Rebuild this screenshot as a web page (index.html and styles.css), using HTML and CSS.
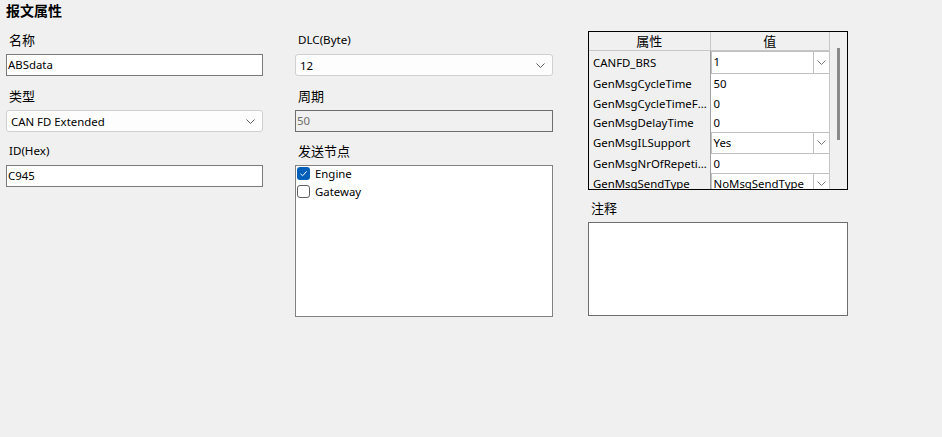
FILE: index.html
```html
<!DOCTYPE html>
<html lang="zh-CN">
  <head>
    <meta charset="UTF-8" />
    <title>报文属性</title>
    <link rel="stylesheet" href="styles.css">
  </head>
  <body>
    <h1 class="title">报文属性</h1>
    <div class="columns">
      <div class="col col-a">
        <span class="lbl">名称</span>
        <div class="edit">ABSdata</div>

        <span class="lbl">类型</span>
        <div class="combo">
          <span>CAN FD Extended</span>
          <svg class="chev" width="9" height="5" viewBox="0 0 9 5"><path d="M0.5 0.5 L4.5 4.5 L8.5 0.5" fill="none" stroke="#5a5a5a" stroke-width="1"/></svg>
        </div>

        <span class="lbl latin last">ID(Hex)</span>
        <div class="edit">C945</div>
      </div>

      <div class="col col-b">
        <span class="lbl latin">DLC(Byte)</span>
        <div class="combo">
          <span>12</span>
          <svg class="chev" width="9" height="5" viewBox="0 0 9 5"><path d="M0.5 0.5 L4.5 4.5 L8.5 0.5" fill="none" stroke="#5a5a5a" stroke-width="1"/></svg>
        </div>

        <span class="lbl">周期</span>
        <div class="edit disabled">50</div>

        <span class="lbl last">发送节点</span>
        <div class="list">
          <div class="item">
            <span class="check on">
              <svg width="13" height="13" viewBox="0 0 13 13"><path d="M3.5 6.8 L5.6 8.8 L9.6 4.4" fill="none" stroke="#fff" stroke-width="1"/></svg>
            </span>
            Engine
          </div>
          <div class="item">
            <span class="check"></span>
            Gateway
          </div>
        </div>
      </div>

      <div class="col col-c">
        <div class="grid">
          <table class="props">
            <tr class="head">
              <th>属性</th>
              <th>值</th>
            </tr>
            <tr class="r-combo tall">
              <td class="key">CANFD_BRS</td>
              <td class="val"><div class="cell-combo"><span>1</span><i class="drop"><svg width="9" height="5" viewBox="0 0 9 5"><path d="M0.5 0.5 L4.5 4.5 L8.5 0.5" fill="none" stroke="#7a7a7a" stroke-width="1"/></svg></i></div></td>
            </tr>
            <tr class="r-after">
              <td class="key">GenMsgCycleTime</td>
              <td class="val">50</td>
            </tr>
            <tr>
              <td class="key">GenMsgCycleTimeFast</td>
              <td class="val">0</td>
            </tr>
            <tr>
              <td class="key">GenMsgDelayTime</td>
              <td class="val">0</td>
            </tr>
            <tr class="r-combo">
              <td class="key">GenMsgILSupport</td>
              <td class="val"><div class="cell-combo"><span>Yes</span><i class="drop"><svg width="9" height="5" viewBox="0 0 9 5"><path d="M0.5 0.5 L4.5 4.5 L8.5 0.5" fill="none" stroke="#7a7a7a" stroke-width="1"/></svg></i></div></td>
            </tr>
            <tr>
              <td class="key">GenMsgNrOfRepetitions</td>
              <td class="val">0</td>
            </tr>
            <tr class="r-combo">
              <td class="key">GenMsgSendType</td>
              <td class="val"><div class="cell-combo"><span>NoMsgSendType</span><i class="drop"><svg width="9" height="5" viewBox="0 0 9 5"><path d="M0.5 0.5 L4.5 4.5 L8.5 0.5" fill="none" stroke="#7a7a7a" stroke-width="1"/></svg></i></div></td>
            </tr>
          </table>
          <div class="scroll"><div class="thumb"></div></div>
        </div>

        <span class="lbl lbl-note">注释</span>
        <div class="note"></div>
      </div>
    </div>
  </body>
</html>
```

FILE: styles.css
```css
* {
  box-sizing: border-box;
}
body {
  margin: 0;
  width: 942px;
  height: 437px;
  background: #f0f0f0;
  color: #000;
  font-family: "Noto Sans", "Noto Sans CJK SC", sans-serif;
  font-size: 11.4px;
}
.title {
  margin: 0;
  padding-left: 6px;
  height: 20px;
  line-height: 20px;
  font-size: 14px;
  font-weight: bold;
  font-family: "Noto Sans CJK SC", sans-serif;
}
.columns {
  display: flex;
  padding-left: 6px;
}
.col-a {
  width: 257px;
}
.col-b {
  width: 258px;
  margin-left: 32px;
}
.col-c {
  width: 260px;
  margin-left: 35px;
}
.lbl {
  display: block;
  height: 20px;
  line-height: 20px;
  margin: 10px 0 4px 3px;
  font-size: 13px;
}
.lbl.latin {
  font-size: 11.6px;
}
.lbl.last {
  margin-top: 9px;
}
.edit {
  height: 22px;
  line-height: 20px;
  padding-left: 1px;
  border: 1px solid #7a7a7a;
  background: #fff;
}
.edit.disabled {
  background: #f0f0f0;
  color: #6d6d6d;
  border-color: #6e6e6e;
}
.combo {
  display: flex;
  align-items: center;
  justify-content: space-between;
  height: 22px;
  padding: 0 7px 0 4px;
  border: 1px solid #d0d0d0;
  border-radius: 3px;
  background: #fdfdfd;
}
.list {
  height: 152px;
  border: 1px solid #828282;
  background: #fff;
}
.item {
  display: flex;
  align-items: center;
  height: 18px;
  padding-left: 1px;
  gap: 5px;
}
.item:first-child {
  margin-top: -2px;
}
.check {
  display: block;
  width: 13px;
  height: 13px;
  border: 1px solid #5f5f5f;
  border-radius: 3px;
  background: #fff;
}
.check.on {
  border: none;
  background: #005fb8;
}
.check svg {
  display: block;
}

/* property grid */
.grid {
  display: flex;
  margin-top: 11px;
  height: 159px;
  border: 1px solid #000;
  overflow: hidden;
}
.props {
  width: 241px;
  border-collapse: collapse;
  table-layout: fixed;
  align-self: flex-start;
}
.props th {
  height: 18px;
  padding: 0;
  font-weight: normal;
  font-size: 13px;
  line-height: 17px;
  background: #f0f0f0;
  border-right: 1px solid #c6c6c6;
  border-bottom: 1px solid #c6c6c6;
  font-family: "Noto Sans CJK SC", sans-serif;
}
.props th:first-child {
  width: 121px;
}
.props td {
  padding: 0;
  height: 19px;
  line-height: 19px;
}
.props tr.r-after td {
  height: 20px;
}
.props tr.r-combo td {
  height: 22px;
}
.props tr.tall td {
  height: 23px;
}
.props .key {
  padding-left: 4px;
  background: #f0f0f0;
  border-right: 1px solid #a0a0a0;
  white-space: nowrap;
  overflow: hidden;
  text-overflow: ellipsis;
}
.props .val {
  padding-left: 3px;
  background: #fff;
  border-right: 1px solid #c6c6c6;
}
.props tr.r-combo .val {
  padding: 0;
}
.cell-combo {
  display: flex;
  height: 22px;
  border: 1px solid #c0c0c0;
  border-right: none;
  background: #fff;
}
.tall .cell-combo {
  height: 23px;
}
.cell-combo span {
  flex: 1;
  padding-left: 2px;
  line-height: 20px;
  white-space: nowrap;
  overflow: hidden;
}
.cell-combo .drop {
  display: flex;
  align-items: center;
  justify-content: center;
  width: 16px;
  border-left: 1px solid #c0c0c0;
}
.scroll {
  flex: 1;
  background: #f0f0f0;
  padding: 16px 0 0 7px;
}
.thumb {
  width: 3px;
  height: 92px;
  background: #8a8a8a;
}
.lbl-note {
  margin-top: 8px;
}
.note {
  height: 94px;
  border: 1px solid #6e6e6e;
  background: #fff;
}
```
